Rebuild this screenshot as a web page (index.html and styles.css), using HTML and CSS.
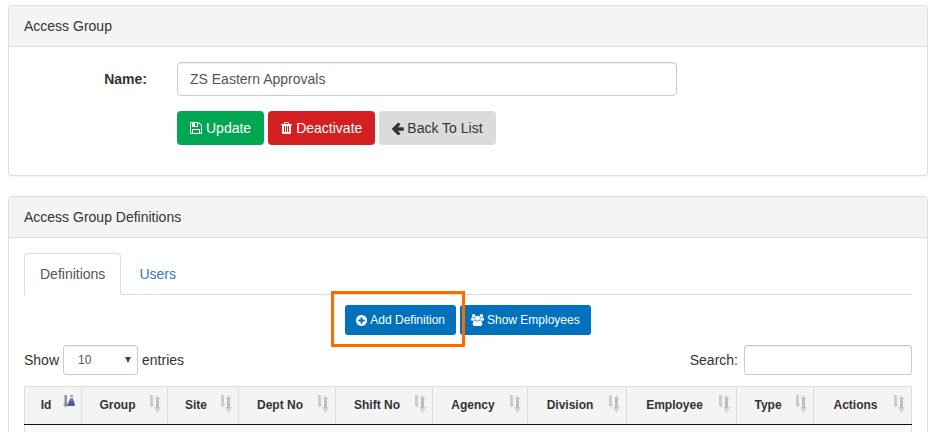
FILE: index.html
```html
<!DOCTYPE html>
<html lang="en">
<head>
  <meta charset="UTF-8">
  <meta name="viewport" content="width=device-width, initial-scale=1.0">
  <title>Access Group</title>
  <link rel="stylesheet" href="styles.css">
</head>
<body>
  <!-- sort icons shared by the table header -->
  <svg class="sprite" aria-hidden="true">
    <symbol id="sort-both" viewBox="0 0 12 18">
      <path d="M1 0h3v9h1.500L2.700 12.500 0 9h1z" fill="#cdcdd1"/>
      <path d="M8.500 0L11.500 4H10v8h2l-3.500 6L5 12h2V4H5.500z" fill="#d2d2d4"/>
      <path d="M7 3h3v10H7z" fill="#bdbdbf"/>
    </symbol>
    <symbol id="sort-asc" viewBox="0 0 12 18">
      <path d="M1.500 0h2.500v9h1.500L2.700 12.500 0 9h1.500z" fill="#8f8f99"/>
      <path d="M7 0h3v2H7z" fill="#a6a6b2"/>
      <path d="M7.500 3h2l1.500 3H6z" fill="#7676a8"/>
      <path d="M6 6h5l1 5H4z" fill="#5357a4"/>
    </symbol>
  </svg>

  <div class="panel">
    <div class="panel-heading">Access Group</div>
    <div class="panel-body">
      <form class="form-horizontal">
        <label class="control-label" for="name">Name:</label>
        <div class="form-field">
          <input type="text" class="form-control" id="name" value="ZS Eastern Approvals">
        </div>
        <div class="form-field form-actions">
          <button type="button" class="btn btn-success">
            <svg class="icon" viewBox="0 128 1536 1536"><path d="M384 1536h768v-384h-768v384zm896 0h128v-896q0-14-10-38.500t-20-34.500l-281-281q-10-10-34-20t-39-10v416q0 40-28 68t-68 28h-576q-40 0-68-28t-28-68v-416h-128v1280h128v-416q0-40 28-68t68-28h832q40 0 68 28t28 68v416zm-384-928v-320q0-13-9.500-22.500t-22.500-9.500h-192q-13 0-22.500 9.500t-9.500 22.500v320q0 13 9.500 22.500t22.500 9.500h192q13 0 22.500-9.500t9.500-22.500zm640 32v928q0 40-28 68t-68 28h-1344q-40 0-68-28t-28-68v-1344q0-40 28-68t68-28h928q40 0 88 20t76 48l280 280q28 28 48 76t20 88z"/></svg>
            Update
          </button>
          <button type="button" class="btn btn-danger">
            <svg class="icon icon-narrow" viewBox="192 128 1408 1536"><path d="M704 1376v-704q0-14-9-23t-23-9h-64q-14 0-23 9t-9 23v704q0 14 9 23t23 9h64q14 0 23-9t9-23zm256 0v-704q0-14-9-23t-23-9h-64q-14 0-23 9t-9 23v704q0 14 9 23t23 9h64q14 0 23-9t9-23zm256 0v-704q0-14-9-23t-23-9h-64q-14 0-23 9t-9 23v704q0 14 9 23t23 9h64q14 0 23-9t9-23zm-544-992h448l-48-117q-7-9-17-11h-317q-10 2-17 11zm928 32v64q0 14-9 23t-23 9h-96v948q0 83-47 143.500t-113 60.500h-832q-66 0-113-58.500t-47-141.500v-952h-96q-14 0-23-9t-9-23v-64q0-14 9-23t23-9h309l70-167q15-37 54-63t79-26h320q40 0 79 26t54 63l70 167h309q14 0 23 9t9 23z"/></svg>
            Deactivate
          </button>
          <button type="button" class="btn btn-default">
            <svg class="icon icon-arrow" viewBox="160 128 1536 1536"><path d="M1664 896v128q0 53-32.500 90.500t-84.500 37.500h-704l293 294q38 36 38 90t-38 90l-75 76q-37 37-90 37-52 0-91-37l-651-652q-37-37-37-90 0-52 37-91l651-650q38-38 91-38 52 0 90 38l75 74q38 38 38 91t-38 91l-293 293h704q52 0 84.500 37.500t32.500 90.500z"/></svg>
            Back To List
          </button>
        </div>
      </form>
    </div>
  </div>

  <div class="panel">
    <div class="panel-heading">Access Group Definitions</div>
    <div class="panel-body">
      <nav class="nav-tabs">
        <a href="#definitions" class="tab active">Definitions</a>
        <a href="#users" class="tab">Users</a>
      </nav>

      <div class="toolbar">
        <div class="highlight">
          <button type="button" class="btn btn-primary btn-sm">
            <svg class="icon" viewBox="128 128 1536 1536"><path d="M1344 960v-128q0-26-19-45t-45-19h-256v-256q0-26-19-45t-45-19h-128q-26 0-45 19t-19 45v256h-256q-26 0-45 19t-19 45v128q0 26 19 45t45 19h256v256q0 26 19 45t45 19h128q26 0 45-19t19-45v-256h256q26 0 45-19t19-45zm320-64q0 209-103 385.500t-279.500 279.500-385.500 103-385.500-103-279.500-279.500-103-385.500 103-385.500 279.500-279.500 385.500-103 385.500 103 279.500 279.500 103 385.500z"/></svg>
            Add Definition
          </button>
        </div>
        <button type="button" class="btn btn-primary btn-sm">
          <svg class="icon icon-wide" viewBox="-64 0 1920 1792"><path d="M529 896q-162 5-265 128h-134q-82 0-138-40.500t-56-118.500q0-353 124-353 6 0 43.500 21t97.500 42.500 119 21.500q67 0 133-23-5 37-5 66 0 139 81 256zm1071 637q0 120-73 189.500t-194 69.500h-874q-121 0-194-69.500t-73-189.500q0-53 3.500-103.500t14-109 26.500-108.500 43-97.500 62-81 85.500-53.500 111.500-20q10 0 43 21.500t73 48 107 48 135 21.500 135-21.500 107-48 73-48 43-21.500q61 0 111.500 20t85.500 53.500 62 81 43 97.500 26.500 108.500 14 109 3.500 103.500zm-1024-1277q0 106-75 181t-181 75-181-75-75-181 75-181 181-75 181 75 75 181zm704 384q0 159-112.500 271.500t-271.500 112.500-271.500-112.500-112.500-271.500 112.500-271.500 271.500-112.500 271.500 112.500 112.500 271.500zm576 225q0 78-56 118.500t-138 40.500h-134q-103-123-265-128 81-117 81-256 0-29-5-66 66 23 133 23 59 0 119-21.500t97.500-42.500 43.500-21q124 0 124 353zm-128-609q0 106-75 181t-181 75-181-75-75-181 75-181 181-75 181 75 75 181z"/></svg>
          Show Employees
        </button>
      </div>

      <div class="table-controls">
        <label class="control">
          Show
          <span class="select-wrap">
            <select class="form-control input-sm">
              <option>10</option>
              <option>25</option>
              <option>50</option>
              <option>100</option>
            </select>
          </span>
          entries
        </label>
        <label class="control control-search">
          Search:
          <input type="search" class="form-control input-sm">
        </label>
      </div>

      <table class="data-table">
        <colgroup>
          <col class="col-id">
          <col class="col-group">
          <col class="col-site">
          <col class="col-dept">
          <col class="col-shift">
          <col class="col-agency">
          <col class="col-division">
          <col class="col-employee">
          <col class="col-type">
          <col class="col-actions">
        </colgroup>
        <thead>
          <tr>
            <th><div class="th-inner"><span>Id</span><svg><use href="#sort-asc"/></svg></div></th>
            <th><div class="th-inner"><span>Group</span><svg><use href="#sort-both"/></svg></div></th>
            <th><div class="th-inner"><span>Site</span><svg><use href="#sort-both"/></svg></div></th>
            <th><div class="th-inner"><span>Dept No</span><svg><use href="#sort-both"/></svg></div></th>
            <th><div class="th-inner"><span>Shift No</span><svg><use href="#sort-both"/></svg></div></th>
            <th><div class="th-inner"><span>Agency</span><svg><use href="#sort-both"/></svg></div></th>
            <th><div class="th-inner"><span>Division</span><svg><use href="#sort-both"/></svg></div></th>
            <th><div class="th-inner"><span>Employee</span><svg><use href="#sort-both"/></svg></div></th>
            <th><div class="th-inner"><span>Type</span><svg><use href="#sort-both"/></svg></div></th>
            <th><div class="th-inner"><span>Actions</span><svg><use href="#sort-both"/></svg></div></th>
          </tr>
        </thead>
        <tbody>
          <tr>
            <td colspan="10"></td>
          </tr>
        </tbody>
      </table>
    </div>
  </div>
</body>
</html>
```

FILE: styles.css
```css
* {
  box-sizing: border-box;
}

body {
  margin: 0;
  padding: 5px 4px 0 8px;
  height: 100vh;
  overflow: hidden;
  background: #fff;
  color: #333;
  font-family: "Liberation Sans", Arial, sans-serif;
  font-size: 14px;
  line-height: 20px;
}

.sprite {
  display: none;
}

/* Panels */
.panel {
  margin-bottom: 20px;
  background: #fff;
  border: 1px solid #ddd;
  border-radius: 4px;
  box-shadow: 0 1px 1px rgba(0, 0, 0, 0.05);
}

.panel-heading {
  padding: 10px 15px;
  background: #f4f4f4;
  border-bottom: 1px solid #ddd;
  border-radius: 3px 3px 0 0;
}

.panel-body {
  padding: 15px;
}

/* Form */
.form-horizontal {
  display: grid;
  grid-template-columns: 1fr 5fr;
  row-gap: 15px;
  margin: 0 -15px 15px;
}

.control-label {
  padding: 7px 15px 0;
  font-weight: bold;
  text-align: right;
}

.form-field {
  padding: 0 15px;
}

.form-actions {
  grid-column: 2;
  display: flex;
  gap: 4px;
}

.form-control {
  display: block;
  width: 100%;
  max-width: 500px;
  height: 34px;
  padding: 6px 12px;
  background: #fff;
  border: 1px solid #ccc;
  border-radius: 4px;
  box-shadow: inset 0 1px 1px rgba(0, 0, 0, 0.075);
  color: #555;
  font-family: inherit;
  font-size: 14px;
  line-height: 20px;
}

.input-sm {
  height: 30px;
  padding: 5px 10px;
  border-radius: 3px;
  font-size: 12px;
  line-height: 18px;
}

/* Buttons */
.btn {
  display: inline-flex;
  align-items: center;
  gap: 4px;
  padding: 6px 12px;
  border: 1px solid transparent;
  border-radius: 4px;
  color: #fff;
  font-family: inherit;
  font-size: 14px;
  line-height: 20px;
  white-space: nowrap;
  cursor: pointer;
}

.btn-sm {
  gap: 3px;
  padding: 5px 10px;
  border-radius: 3px;
  font-size: 12px;
  line-height: 18px;
}

.btn-success {
  background: #00a651;
}

.btn-danger {
  background: #d42020;
}

.btn-default {
  gap: 3px;
  background: #dbdbdb;
  color: #333;
}

.btn-primary {
  background: #0072bc;
}

.icon {
  width: 12px;
  height: 12px;
  fill: currentColor;
}

.icon-narrow {
  width: 11px;
}

.icon-arrow {
  height: 13px;
  stroke: currentColor;
  stroke-width: 60;
}

.btn-sm .icon {
  width: 11px;
  height: 11px;
}

.btn-sm .icon-wide {
  width: 13px;
  height: 12px;
}

/* Tabs */
.nav-tabs {
  display: flex;
  gap: 2px;
  border-bottom: 1px solid #ddd;
}

.tab {
  margin-bottom: -1px;
  padding: 10px 15px;
  border: 1px solid transparent;
  border-radius: 4px 4px 0 0;
  color: #337ab7;
  text-decoration: none;
}

.tab.active {
  background: #fff;
  border-color: #ddd #ddd #fff;
  color: #555;
}

/* Table toolbar */
.toolbar {
  display: flex;
  justify-content: center;
  gap: 4px;
  padding: 10px 0;
}

.highlight {
  position: relative;
  display: flex;
}

.highlight::after {
  content: "";
  position: absolute;
  z-index: 1;
  top: -14px;
  right: -9px;
  bottom: -12px;
  left: -14px;
  border: 3px solid #ff6a00;
  pointer-events: none;
}

.table-controls {
  display: flex;
  justify-content: space-between;
  margin-bottom: 11px;
}

.control {
  display: flex;
  align-items: center;
  gap: 4px;
}

.control-search {
  gap: 6px;
}

.control-search .form-control {
  width: 168px;
}

.select-wrap {
  position: relative;
}

.select-wrap .form-control {
  width: 75px;
  padding-left: 14px;
  appearance: none;
}

/* drop-down arrow over the select */
.select-wrap::after {
  content: "";
  position: absolute;
  top: 12px;
  right: 7px;
  border: 3px solid transparent;
  border-top: 6px solid #444;
  border-bottom: 0;
  pointer-events: none;
}

/* Table */
.data-table {
  width: 100%;
  table-layout: fixed;
  border-collapse: collapse;
  border: 1px solid #ddd;
  font-size: 12px;
  line-height: 18px;
}

.data-table th {
  padding: 0;
  background: #f4f4f4;
  border: 1px solid #ddd;
  border-bottom: 1px solid #111;
}

.data-table td {
  height: 36px;
  padding: 8px;
  background: #f9f9f9;
}

.th-inner {
  display: flex;
  align-items: flex-start;
  padding: 8px 6px 9px 4px;
}

.th-inner span {
  flex: 1;
  line-height: 20px;
  white-space: nowrap;
}

.th-inner svg {
  width: 12px;
  height: 18px;
}

.col-id {
  width: 57px;
}

.col-group {
  width: 86px;
}

.col-site {
  width: 71px;
}

.col-dept,
.col-shift {
  width: 97px;
}

.col-agency {
  width: 95px;
}

.col-division {
  width: 99px;
}

.col-employee {
  width: 110px;
}

.col-type {
  width: 77px;
}

.col-actions {
  width: 98px;
}
```
